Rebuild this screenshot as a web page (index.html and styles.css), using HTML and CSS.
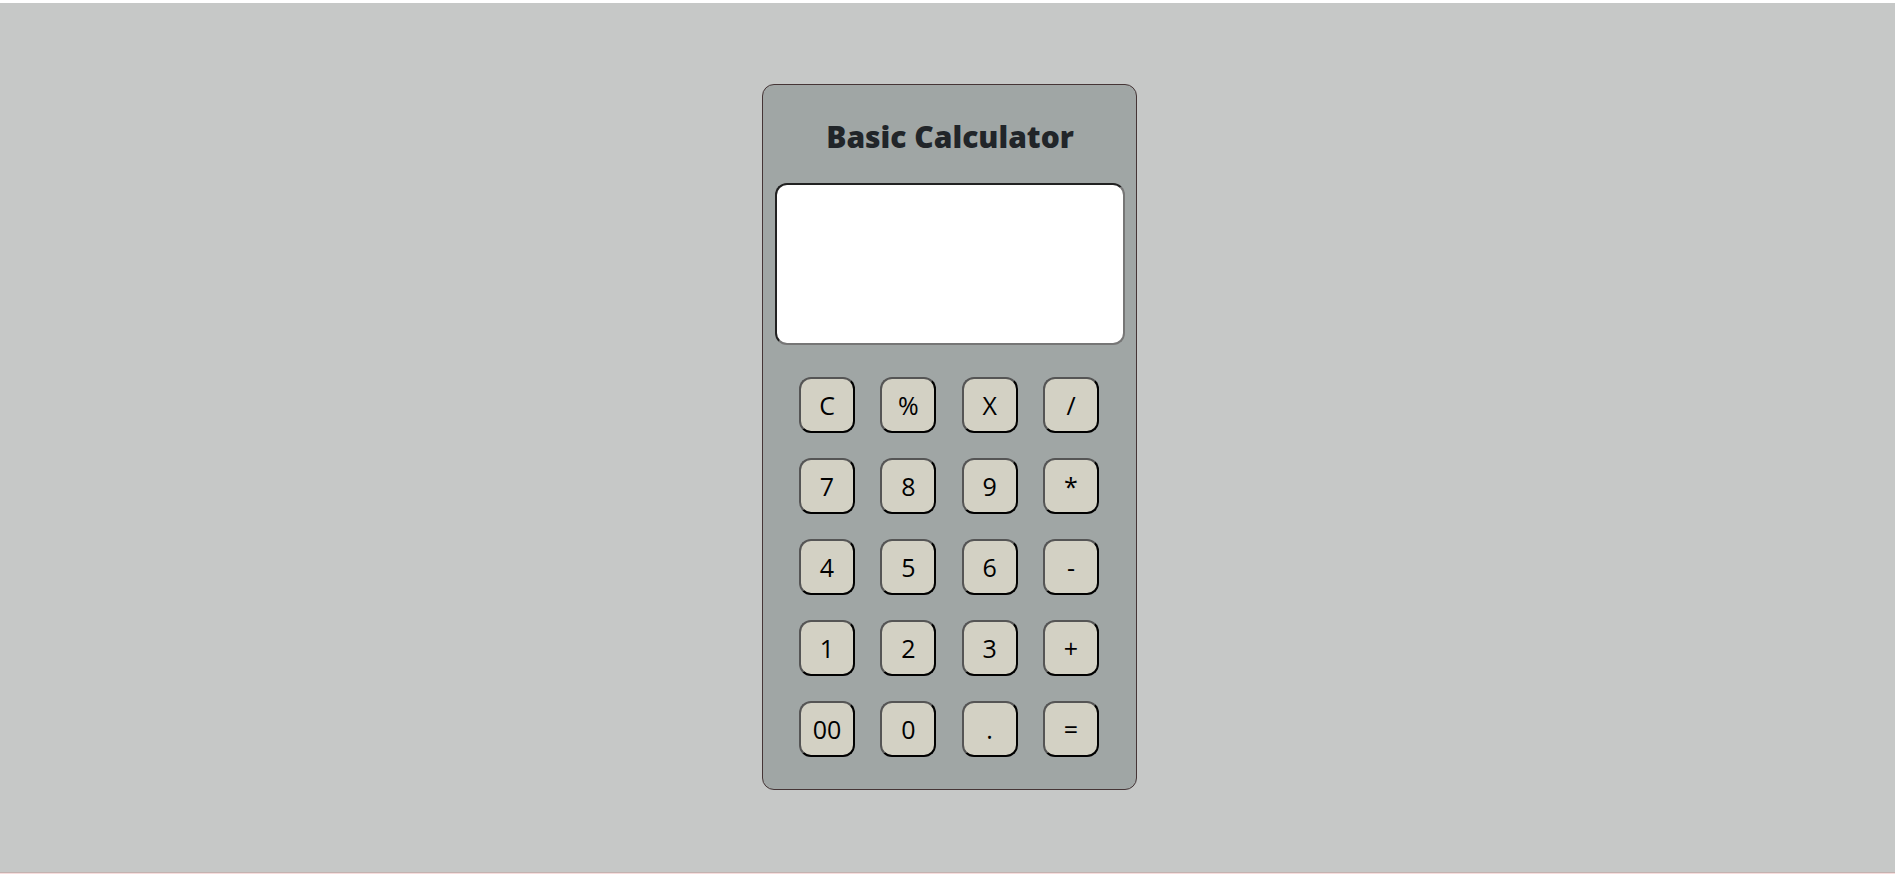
FILE: index.html
```
<!DOCTYPE html>
<html lang="en">
<head>
<meta charset="utf-8">
<meta name="viewport" content="width=device-width, initial-scale=1">
<title>Basic Calculator</title>
<link rel="stylesheet" href="styles.css">
</head>
<body>
<main class="page">
  <section class="calculator">
    <h1 class="title">Basic Calculator</h1>
    <input class="display" type="text" aria-label="Display">
    <div class="keys">
      <button class="key" type="button">C</button>
      <button class="key" type="button">%</button>
      <button class="key" type="button">X</button>
      <button class="key" type="button">/</button>
      <button class="key" type="button">7</button>
      <button class="key" type="button">8</button>
      <button class="key" type="button">9</button>
      <button class="key" type="button">*</button>
      <button class="key" type="button">4</button>
      <button class="key" type="button">5</button>
      <button class="key" type="button">6</button>
      <button class="key" type="button">-</button>
      <button class="key" type="button">1</button>
      <button class="key" type="button">2</button>
      <button class="key" type="button">3</button>
      <button class="key" type="button">+</button>
      <button class="key" type="button">00</button>
      <button class="key" type="button">0</button>
      <button class="key" type="button">.</button>
      <button class="key" type="button">=</button>
    </div>
  </section>
</main>
</body>
</html>
```
FILE: styles.css
```
* {
  box-sizing: border-box;
}

body {
  margin: 0;
  background: #f7dddd;
  font-family: "Open Sans", "Noto Sans", sans-serif;
}

.page {
  display: flex;
  align-items: center;
  justify-content: center;
  min-height: calc(100vh - 1px);
  padding: 0 0 2px 4px;
  border-top: 3px solid #ffffff;
  border-bottom: 1px solid #c4b2b0;
  background: #c6c8c7;
}

.calculator {
  width: 375px;
  padding: 32px 11px 32px 12px;
  border: 1px solid #453536;
  border-radius: 12px;
  background: #a0a6a5;
}

.title {
  margin: 0 0 26px;
  color: #212529;
  font-size: 30px;
  font-weight: 800;
  line-height: 40px;
  text-align: center;
}

.display {
  display: block;
  width: 100%;
  height: 162px;
  margin-bottom: 32px;
  padding: 0 12px;
  border: 2px solid;
  border-color: #212121 #767676 #767676 #212121;
  border-radius: 12px;
  background: #ffffff;
  font: inherit;
  font-size: 30px;
}

.keys {
  display: grid;
  grid-template-columns: repeat(4, 56px);
  justify-content: space-between;
  row-gap: 25px;
  padding: 0 26px 0 24px;
}

.key {
  height: 56px;
  padding: 0;
  border: 2px solid;
  border-color: #555555 #000000 #000000 #555555;
  border-radius: 12px;
  background: #d3d1c4;
  color: #000000;
  font: inherit;
  font-size: 25px;
}
```
